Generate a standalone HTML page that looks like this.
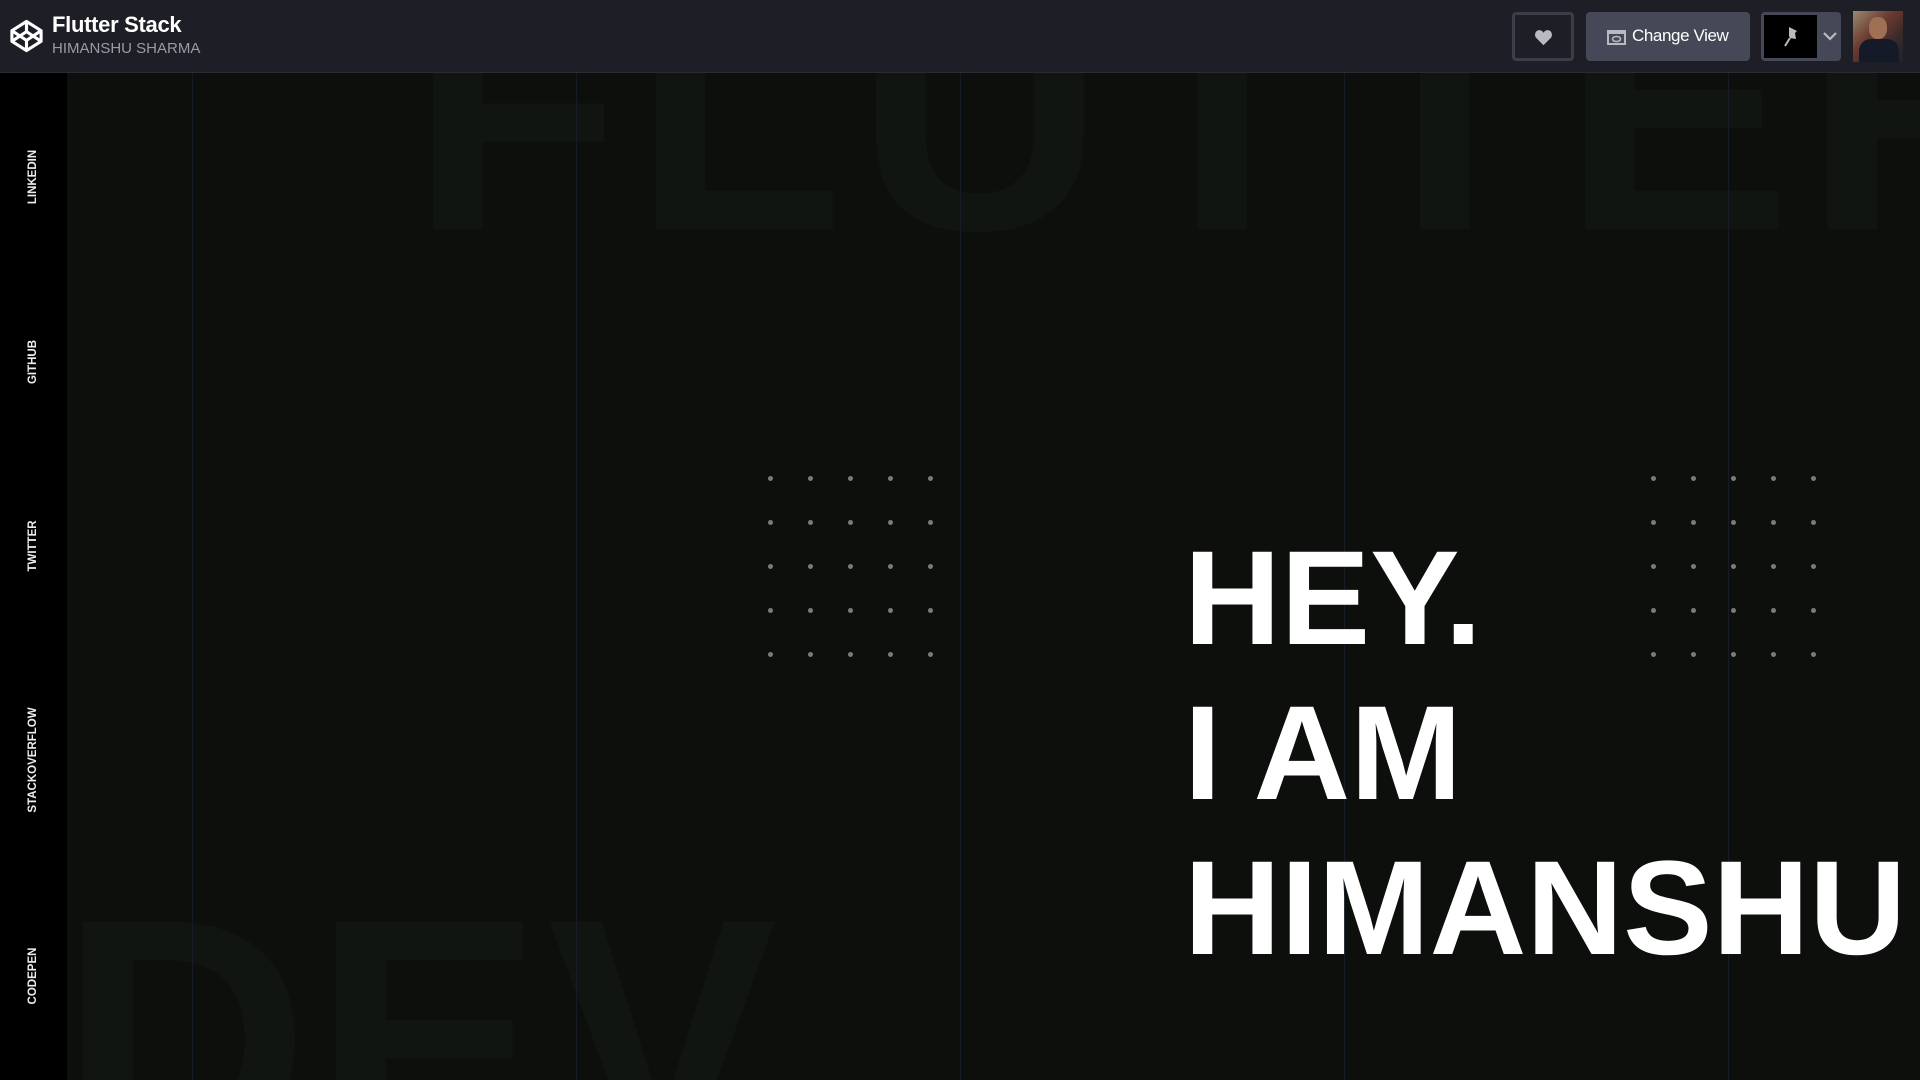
<!DOCTYPE html>
<html><head><meta charset="utf-8"><style>
*{margin:0;padding:0;box-sizing:border-box}
html,body{width:1920px;height:1080px;overflow:hidden;background:#0d0f0c;font-family:"Liberation Sans",Arial,sans-serif}
#wrap{position:relative;width:1920px;height:1080px;overflow:hidden}
.hdr{position:absolute;left:0;top:0;width:1920px;height:73px;background:#1e1f26;border-bottom:1px solid #2a2c34;z-index:5}
.title{position:absolute;left:52px;top:12px;color:#fff;font-weight:bold;font-size:22px;letter-spacing:-0.3px}
.sub{position:absolute;left:52px;top:40px;color:#9a9aa8;font-size:15px}
.btn{position:absolute;top:12px;height:49px;border-radius:4px}
.side{position:absolute;left:0;top:73px;width:67px;height:1007px;background:#000;z-index:3}
.lab{position:absolute;left:33px;color:#eee;font-weight:bold;font-size:11.5px;transform:translate(-50%,-50%) rotate(-90deg);white-space:nowrap}
.vl{position:absolute;top:73px;width:1px;height:1007px;background:#141d25}
.bg{position:absolute;color:#111512;font-weight:bold;font-size:345px;line-height:1;white-space:nowrap}
.big{position:absolute;left:1184px;color:#fff;font-weight:bold;font-size:134px;line-height:1;white-space:nowrap}
.dot{position:absolute;width:5px;height:5px;border-radius:50%;background:#7a7c7a}
</style></head><body><div id="wrap">
<div class="bg" style="left:410px;top:-62px;letter-spacing:12px">FLUTTER</div>
<div class="bg" style="left:60px;top:868px;letter-spacing:4px">DEV</div>
<div class="vl" style="left:192px"></div>
<div class="vl" style="left:576px"></div>
<div class="vl" style="left:960px"></div>
<div class="vl" style="left:1344px"></div>
<div class="vl" style="left:1728px"></div>

<div class="hdr">
<svg style="position:absolute;left:9px;top:18px" width="35" height="36" viewBox="0 0 36 36" fill="none" stroke="#fff" stroke-width="3.2" stroke-linejoin="round"><path d="M18 3 L33 12.5 V23.5 L18 33 L3 23.5 V12.5 Z"/><path d="M3 12.5 L18 22.5 L33 12.5 M3 23.5 L18 13.5 L33 23.5 M18 3 V13.5 M18 22.5 V33"/></svg>
<div class="title">Flutter Stack</div>
<div class="sub">HIMANSHU SHARMA</div>
<div class="btn" style="left:1512px;width:62px;border:3px solid #3b3e49"><svg style="position:absolute;left:19px;top:14px" width="19" height="17" viewBox="0 0 24 22"><path d="M12 21 L2.5 11.5 C-0.5 8 1.5 1.5 6.5 1.5 C9 1.5 11 3 12 5 C13 3 15 1.5 17.5 1.5 C22.5 1.5 24.5 8 21.5 11.5 Z" fill="#b9b9c2"/></svg></div>
<div class="btn" style="left:1586px;width:164px;background:#444857"><svg style="position:absolute;left:21px;top:18px" width="19" height="15" viewBox="0 0 19 15"><rect x="1" y="1" width="17" height="13" fill="none" stroke="#b9b9c2" stroke-width="2"/><rect x="1" y="1" width="17" height="3" fill="#b9b9c2"/><ellipse cx="9.5" cy="9" rx="4" ry="2.5" fill="none" stroke="#b9b9c2" stroke-width="1.6"/></svg><span style="position:absolute;left:46px;top:14px;color:#fff;font-size:17px;letter-spacing:-0.4px">Change View</span></div>
<div class="btn" style="left:1761px;width:80px;background:#444857"><div style="position:absolute;left:3px;top:3px;width:53px;height:43px;background:#000"></div><svg style="position:absolute;left:20px;top:13px" width="20" height="24" viewBox="0 0 20 24"><path d="M8 2 L16 6 L14 8 L15 14 L9 13 L8 11 Z" fill="#bbb"/><path d="M9 13 L4 21" stroke="#bbb" stroke-width="2"/></svg><svg style="position:absolute;left:62px;top:20px" width="14" height="9" viewBox="0 0 14 9"><path d="M1 1 L7 7 L13 1" fill="none" stroke="#bbb" stroke-width="2.2"/></svg></div>
<div style="position:absolute;left:1853px;top:11px;width:50px;height:51px;background:linear-gradient(135deg,#9a8a70 0%,#6b3a30 40%,#3a2a28 70%,#1c2230 100%);overflow:hidden"><div style="position:absolute;left:16px;top:6px;width:18px;height:22px;border-radius:45%;background:#a07056"></div><div style="position:absolute;left:6px;top:28px;width:40px;height:25px;border-radius:12px 12px 0 0;background:#141a28"></div></div>
</div>

<div class="side">
<div class="lab" style="top:104px">LINKEDIN</div>
<div class="lab" style="top:289px">GITHUB</div>
<div class="lab" style="top:473px">TWITTER</div>
<div class="lab" style="top:687px">STACKOVERFLOW</div>
<div class="lab" style="top:903px">CODEPEN</div>
</div>

<div class="big" style="top:532px">HEY.</div>
<div class="big" style="top:687px">I AM</div>
<div class="big" style="top:842px">HIMANSHU</div>

<div class="dot" style="left:768px;top:476px"></div><div class="dot" style="left:808px;top:476px"></div><div class="dot" style="left:848px;top:476px"></div><div class="dot" style="left:888px;top:476px"></div><div class="dot" style="left:928px;top:476px"></div>
<div class="dot" style="left:768px;top:520px"></div><div class="dot" style="left:808px;top:520px"></div><div class="dot" style="left:848px;top:520px"></div><div class="dot" style="left:888px;top:520px"></div><div class="dot" style="left:928px;top:520px"></div>
<div class="dot" style="left:768px;top:564px"></div><div class="dot" style="left:808px;top:564px"></div><div class="dot" style="left:848px;top:564px"></div><div class="dot" style="left:888px;top:564px"></div><div class="dot" style="left:928px;top:564px"></div>
<div class="dot" style="left:768px;top:608px"></div><div class="dot" style="left:808px;top:608px"></div><div class="dot" style="left:848px;top:608px"></div><div class="dot" style="left:888px;top:608px"></div><div class="dot" style="left:928px;top:608px"></div>
<div class="dot" style="left:768px;top:652px"></div><div class="dot" style="left:808px;top:652px"></div><div class="dot" style="left:848px;top:652px"></div><div class="dot" style="left:888px;top:652px"></div><div class="dot" style="left:928px;top:652px"></div>
<div class="dot" style="left:1651px;top:476px"></div><div class="dot" style="left:1691px;top:476px"></div><div class="dot" style="left:1731px;top:476px"></div><div class="dot" style="left:1771px;top:476px"></div><div class="dot" style="left:1811px;top:476px"></div>
<div class="dot" style="left:1651px;top:520px"></div><div class="dot" style="left:1691px;top:520px"></div><div class="dot" style="left:1731px;top:520px"></div><div class="dot" style="left:1771px;top:520px"></div><div class="dot" style="left:1811px;top:520px"></div>
<div class="dot" style="left:1651px;top:564px"></div><div class="dot" style="left:1691px;top:564px"></div><div class="dot" style="left:1731px;top:564px"></div><div class="dot" style="left:1771px;top:564px"></div><div class="dot" style="left:1811px;top:564px"></div>
<div class="dot" style="left:1651px;top:608px"></div><div class="dot" style="left:1691px;top:608px"></div><div class="dot" style="left:1731px;top:608px"></div><div class="dot" style="left:1771px;top:608px"></div><div class="dot" style="left:1811px;top:608px"></div>
<div class="dot" style="left:1651px;top:652px"></div><div class="dot" style="left:1691px;top:652px"></div><div class="dot" style="left:1731px;top:652px"></div><div class="dot" style="left:1771px;top:652px"></div><div class="dot" style="left:1811px;top:652px"></div>
</div></body></html>
